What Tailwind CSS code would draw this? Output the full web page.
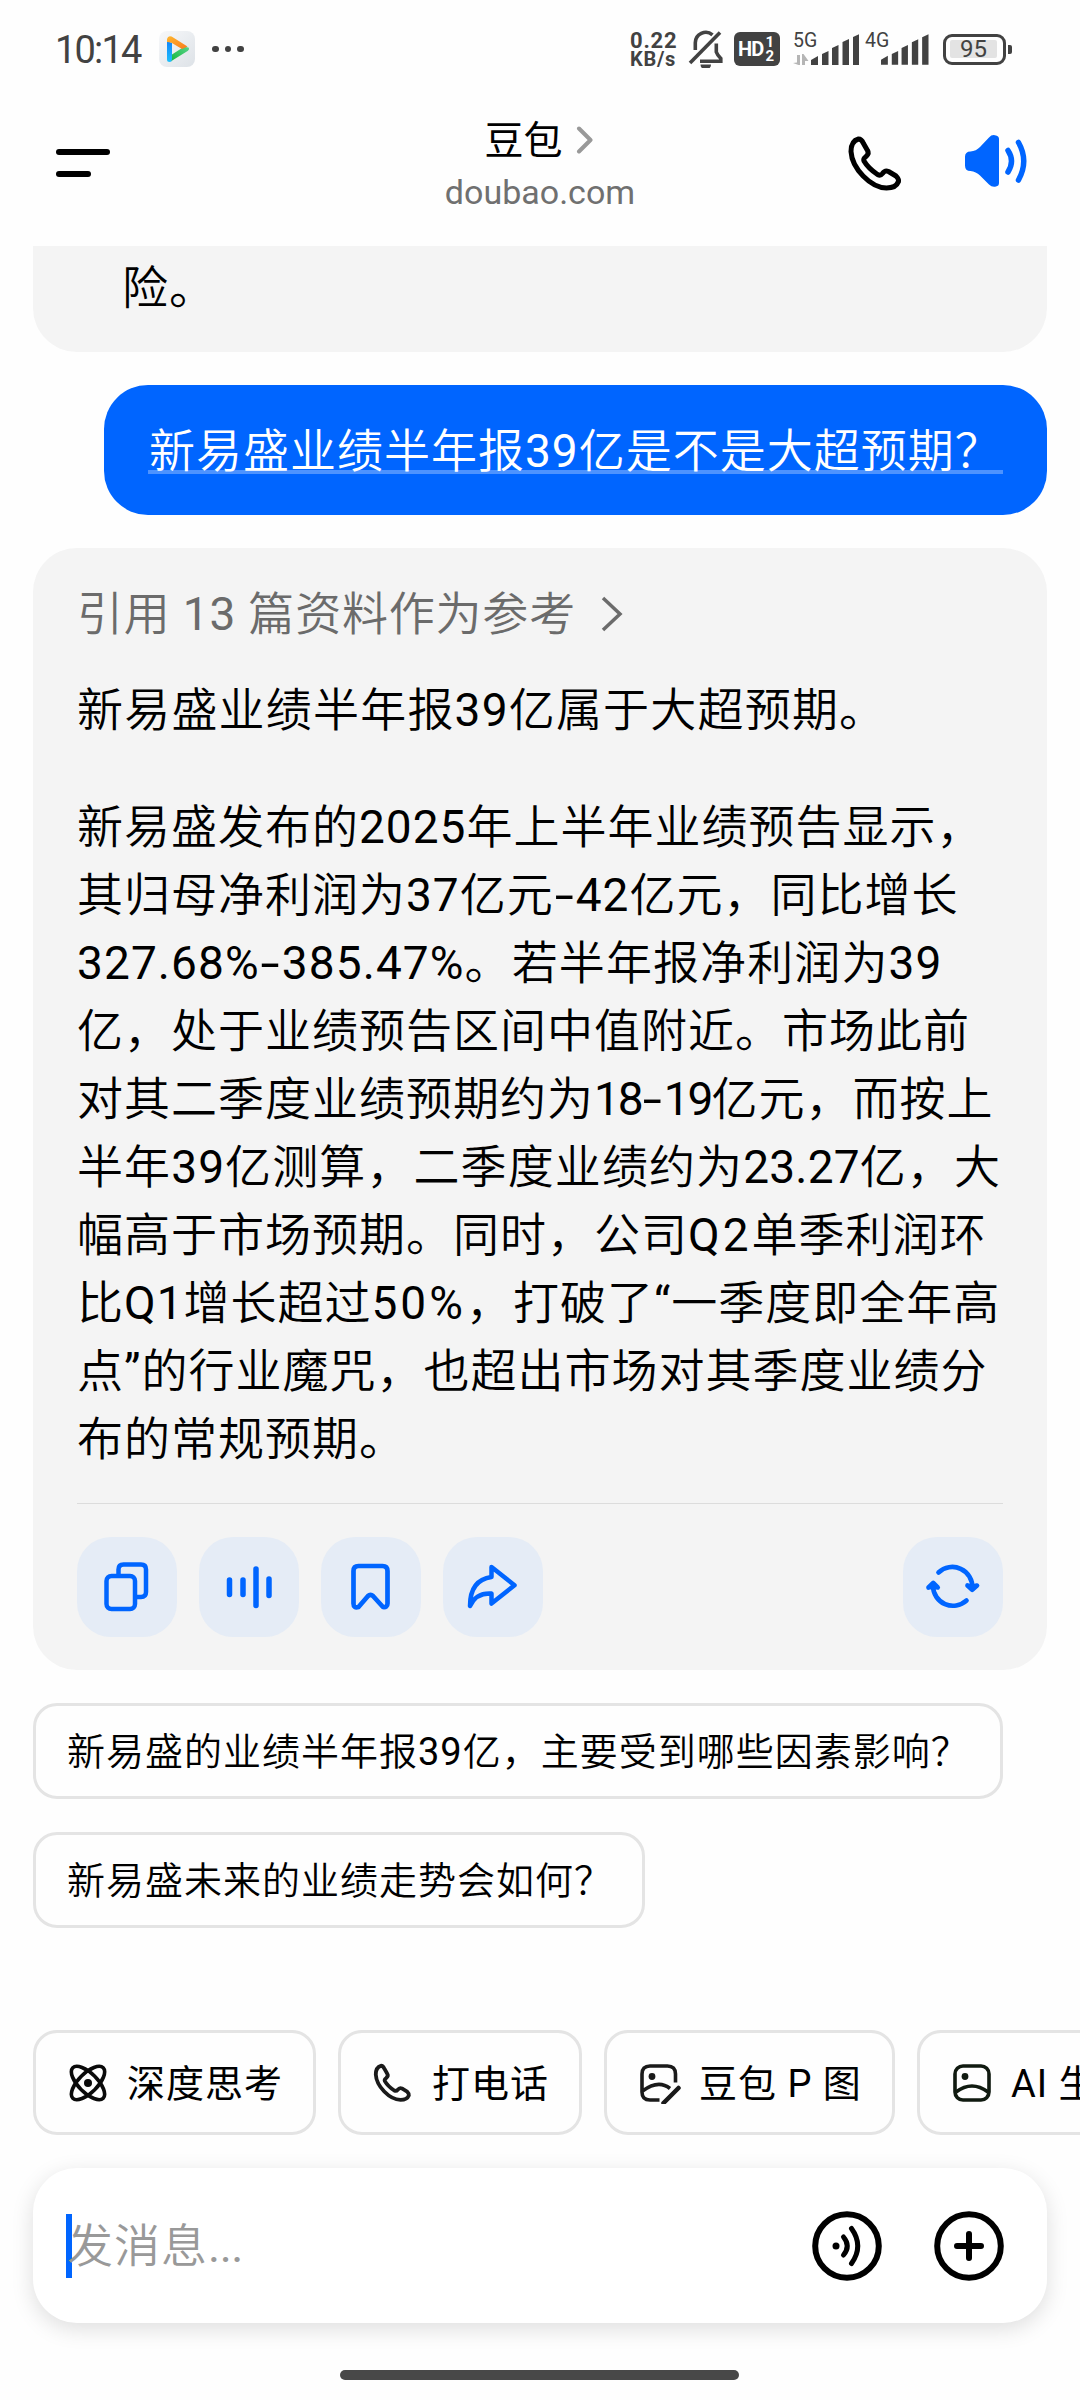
<!DOCTYPE html>
<html lang="zh-CN">
<head>
  <meta charset="UTF-8">
  <meta name="viewport" content="width=device-width, initial-scale=1.0">
  <title>豆包</title>
  <script src="https://cdn.jsdelivr.net/npm/@tailwindcss/browser@4"></script>
</head>
<body class="bg-white">
  <div class="w-[1080px] h-[2400px] overflow-hidden flex flex-col bg-[#fefefe] text-black font-['Roboto','Noto_Sans_CJK_SC_DemiLight','Noto_Sans_CJK_SC',sans-serif]">

    <!-- Status bar -->
    <div class="h-[98px] shrink-0 flex items-center pl-[55px] pr-[68px] text-[#424242]">
      <span class="w-[104px] text-[38px] leading-none tracking-[-1.8px] pt-[2px]">10:14</span>
      <svg class="size-9" viewBox="0 0 36 36">
        <defs>
          <linearGradient id="tile" x1="0" y1="0" x2="1" y2="1"><stop offset="0" stop-color="#f7f8fa"/><stop offset="1" stop-color="#dde2e7"/></linearGradient>
          <linearGradient id="orange" x1="0" y1="0" x2="1" y2="1"><stop offset="0" stop-color="#fdb62f"/><stop offset="1" stop-color="#fb7a1c"/></linearGradient>
          <linearGradient id="green" x1="0" y1="1" x2="1" y2="0"><stop offset="0" stop-color="#12b83c"/><stop offset="1" stop-color="#5ad38a"/></linearGradient>
          <linearGradient id="blue" x1="0" y1="0" x2="0" y2="1"><stop offset="0" stop-color="#0f83fb"/><stop offset="1" stop-color="#1fc0fb"/></linearGradient>
        </defs>
        <rect width="36" height="36" rx="8" fill="url(#tile)"/>
        <path d="M8 10v18.500a2.400 2.400 0 0 0 5 0V12z" fill="url(#blue)"/>
        <path d="M13 23.500 25 15.800l4.500.7q1.500 1.500-.5 3.300L12 30.200q1.200-1 1-3z" fill="url(#green)"/>
        <path d="M8 11V8q.8-3.600 4.600-2.400L28.500 15.400 23 18 12.500 11.700q-3-.8-4.500-.7z" fill="url(#orange)"/>
      </svg>
      <div class="flex gap-[6px] ml-[17px]">
        <i class="size-[6.500px] rounded-full bg-[#424242]"></i>
        <i class="size-[6.500px] rounded-full bg-[#424242]"></i>
        <i class="size-[6.500px] rounded-full bg-[#424242]"></i>
      </div>

      <div class="ml-auto mr-[2px] w-[50px] font-bold text-[22px] leading-[18px] pt-[2px] whitespace-nowrap">
        <div class="tracking-[0.8px]">0.22</div>
        <div class="text-[20px] tracking-[0.7px]">KB/s</div>
      </div>
      <svg class="w-[36px] h-[38px] ml-[6px]" viewBox="0 0 36 38" fill="none" stroke="#424242" stroke-width="3.600">
        <path d="M24.500 4.800A10.500 10.500 0 0 0 7.300 13v7"/>
        <path d="M28.300 13.500V22q1 3 4.500 6.500v2.800H12"/>
        <path d="M2 33 32 2.500"/>
        <path d="M12.500 34.500h10.500a5.200 5.200 0 0 1-10.500 0z" fill="#424242" stroke="none"/>
      </svg>
      <div class="w-[46px] h-[34px] ml-[10px] rounded-[6px] bg-[#424242] text-white font-bold flex items-center pl-[4px] gap-[2px]">
        <span class="text-[20px] leading-none tracking-[-0.8px]">HD</span>
        <span class="text-[15px] leading-[14px]">1<br>2</span>
      </div>
      <div class="w-[66px] h-[34px] ml-[13px] flex relative">
        <span class="text-[19.500px] leading-[18px]">5G</span>
        <svg class="absolute left-0 top-0 w-[66px] h-[34px]" viewBox="793 32 66 34" fill="#424242">
          <path d="M793 62l4-.5V54h3v10h-1.500zM802 64V53h1.500l5 7h-3.500v4z" fill="#b5b5b5" transform="translate(0 1)"/>
          <path d="M811 65v-5l7-4v9zM822 65V54l6.500-3v14zM832 65V48l6.500-3v20zM842.500 65V42l6.500-3v26zM853 65V37l6.500-3v31z"/>
        </svg>
      </div>
      <div class="w-[64px] h-[34px] ml-[6px] flex relative">
        <span class="text-[19.500px] leading-[18px]">4G</span>
        <svg class="absolute left-[16px] top-0 w-[48px] h-[34px]" viewBox="811 32 49 34" fill="#424242">
          <path d="M811 65v-5l7-4v9zM822 65V54l6.500-3v14zM832 65V48l6.500-3v20zM842.500 65V42l6.500-3v26zM853 65V37l6.500-3v31z"/>
        </svg>
      </div>
      <div class="ml-[14px] flex items-center gap-[2px]">
        <div class="w-[63px] h-[31px] rounded-[9px] border-[3px] border-[#424242] p-[4px]">
          <div class="w-[47px] h-[18px] mt-[-0.500px] bg-[#e3e3e3] text-[24px] leading-[18px] text-center rounded-[2px]">95</div>
        </div>
        <i class="w-[4px] h-[9px] bg-[#424242] rounded-r-[2px]"></i>
      </div>
    </div>

    <!-- Header -->
    <div class="h-[148px] shrink-0 grid grid-cols-[390px_300px_1fr]">
      <div class="pt-[51px] pl-[56px] flex flex-col gap-4">
        <i class="w-[54px] h-[6px] rounded-full bg-black"></i>
        <i class="w-[35px] h-[6px] rounded-full bg-black"></i>
      </div>
      <div class="pt-[17px] flex flex-col items-center">
        <div class="flex items-center h-[50px] pr-[2px]">
          <span class="text-[39px] leading-[50px] pt-[2px] font-['Roboto','Noto_Sans_CJK_SC',sans-serif]">豆包</span>
          <svg class="w-[18px] h-[28px] ml-[13px]" viewBox="0 0 18 28" fill="none" stroke="#999" stroke-width="4" stroke-linecap="round" stroke-linejoin="round"><path d="M3 2.500 14.500 14 3 25.500"/></svg>
        </div>
        <div class="text-[34px] leading-[54px] text-[#707070]">doubao.com</div>
      </div>
      <div class="flex pt-[37px] pl-[157px]">
        <svg class="w-[56px] h-[56px]" viewBox="0 0 56 56" fill="none" stroke="#000" stroke-width="5" stroke-linejoin="round">
          <path d="M11.500 4Q4 6 4 16.500C5 33.500 23.500 52.500 39.500 53Q49 53 51.500 46.500Q52 44 49 41L41.500 36.500Q38 35 35.500 38.500Q33.500 41 30.500 39.500Q21 33 17 26Q16 23.500 19 21.500Q22.500 18.500 20.500 15.500L16.500 8.500Q14.500 4 11.500 4Z"/>
        </svg>
        <svg class="w-[66px] h-[54px] ml-[59px]" viewBox="0 0 66 54" fill="none" stroke="#0065ff" stroke-width="5.500" stroke-linecap="round">
          <path d="M3 22Q3 16.500 8.500 16.500Q14 16 18 12L27 2.500Q30-1 34 .5Q37 1 37 4V48Q37 51 34 51.500Q30 52.500 27 49.500L18 40.500Q14 36.500 8.500 36Q3 36 3 30.500Z" fill="#0065ff" stroke="none"/>
          <path d="M46 15.500Q53 26 46 37M56.500 7.500Q67 26 56.500 45"/>
        </svg>
      </div>
    </div>

    <!-- Conversation -->
    <div class="px-[33px] flex flex-col text-[46px] tracking-[1px]">
      <div class="h-[106px] rounded-b-[44px] bg-[#f4f4f4] pl-[89px] pt-[8px] leading-[68px]">险。</div>

      <div class="mt-[33px] h-[130px] w-[943px] self-end rounded-[44px] bg-[#0065ff] text-white px-[44px] pt-[32px]">
        <div class="relative leading-[68px] whitespace-nowrap pl-px">新易盛业绩半年报39亿是不是大超预期？
          <i class="absolute left-0 top-[53px] w-full h-[4px] bg-white/30"></i>
        </div>
      </div>

      <div class="mt-[33px] h-[1122px] rounded-[44px] bg-[#f4f4f4] px-[44px] flex flex-col whitespace-nowrap leading-[68px]">
        <div class="pt-[32px] flex items-center text-[#6b6b6b] tracking-[0.8px]">引用 13 篇资料作为参考
          <svg class="w-[24px] h-[38px] ml-[24px]" viewBox="0 0 24 38" fill="none" stroke="#6b6b6b" stroke-width="3.500"><path d="M3 3 20 19 3 35"/></svg>
        </div>
        <p class="mt-[28px] tracking-[1.2px]">新易盛业绩半年报39亿属于大超预期。</p>
        <div class="mt-[49px]">
          <p>新易盛发布的2025年上半年业绩预告显示，</p>
          <p>其归母净利润为37亿元<span class="inline-block w-[22px] text-center scale-x-[1.5]">-</span>42亿元，同比增长</p>
          <p class="tracking-[1.1px]">327.68%<span class="inline-block w-[22px] text-center scale-x-[1.5]">-</span>385.47%。若半年报净利润为39</p>
          <p>亿，处于业绩预告区间中值附近。市场此前</p>
          <p>对其二季度业绩预期约为<span class="tracking-[-2px]">18</span><span class="inline-block w-[22px] text-center scale-x-[1.5]">-</span><span class="tracking-[-2px]">19</span>亿元，而按上</p>
          <p class="tracking-[1.1px]">半年39亿测算，二季度业绩约为<span class="tracking-[0.200px]">23.27</span>亿，大</p>
          <p>幅高于市场预期。同时，公司<span class="tracking-[3px]">Q2</span>单季利润环</p>
          <p>比Q1增长超过<span class="tracking-[3px]">50%</span>，打破了“一季度即全年高</p>
          <p>点”的行业魔咒，也超出市场对其季度业绩分</p>
          <p>布的常规预期。</p>
        </div>
        <div class="mt-[30px] h-px shrink-0 bg-[#dcdcdc]"></div>
        <div class="mt-[33px] flex gap-[22px]">
          <button class="size-[100px] rounded-[34px] bg-[#e5ecf6]">
            <svg class="size-[100px]" viewBox="77 1537 100 100" fill="none" stroke="#0065ff" stroke-width="4.500">
              <rect x="106.500" y="1576" width="28.500" height="33" rx="5"/>
              <path d="M118.500 1576v-6.500q0-5 5-5H141q5 0 5 5V1592q0 5-5 5h-6"/>
            </svg>
          </button>
          <button class="size-[100px] rounded-[34px] bg-[#e5ecf6]">
            <svg class="size-[100px]" viewBox="199 1537 100 100" fill="none" stroke="#0065ff" stroke-width="5.500" stroke-linecap="round"><path d="M229.500 1580v14.500M243 1580v14.500M256 1569v36.500M269 1579v16.500"/></svg>
          </button>
          <button class="size-[100px] rounded-[34px] bg-[#e5ecf6]">
            <svg class="size-[100px]" viewBox="321 1537 100 100" fill="none" stroke="#0065ff" stroke-width="4.700" stroke-linejoin="round"><path d="M353.500 1571q0-5 5-5h24q5 0 5 5v32.500q0 4-4.500 3.500L373 1596q-2.500-2.500-5 0L358.500 1607q-5 1.500-5-3.500z"/></svg>
          </button>
          <button class="size-[100px] rounded-[34px] bg-[#e5ecf6]">
            <svg class="size-[100px]" viewBox="443 1537 100 100" fill="none" stroke="#0065ff" stroke-width="4.500" stroke-linejoin="round"><path d="M470 1606Q470 1580 491.500 1577V1567L514.500 1585.300L491.500 1603.500V1593.500Q476 1592.500 470 1606Z"/></svg>
          </button>
          <button class="size-[100px] rounded-[34px] bg-[#e5ecf6] ml-auto">
            <svg class="size-[100px]" viewBox="901 1537 100 100" fill="none" stroke="#0065ff" stroke-width="4.700" stroke-linecap="round" stroke-linejoin="round">
              <path d="M936.500 1572.500A20 20 0 0 1 970.300 1588M964.500 1600.500A20 20 0 0 1 931 1586"/>
              <path d="M965.500 1585.500l4.700 4.300 4.800-4.300-4.800 1zM926.500 1587.500l4.700-4.500 4.500 4.500-4.500-1z"/>
            </svg>
          </button>
        </div>
      </div>

      <!-- Suggested questions -->
      <div class="mt-[33px] h-[96px] w-[970px] rounded-[24px] border-[3px] border-[#e4e4e4] pl-[31px] pt-px text-[38px] leading-[90px] whitespace-nowrap">新易盛的业绩半年报39亿，主要受到哪些因素影响？</div>
      <div class="mt-[33px] h-[96px] w-[612px] rounded-[24px] border-[3px] border-[#e4e4e4] pl-[31px] pt-px text-[38px] leading-[90px] whitespace-nowrap">新易盛未来的业绩走势会如何？</div>
    </div>

    <!-- Shortcut chips -->
    <div class="mt-[102px] ml-[33px] h-[105px] shrink-0 flex gap-[22px] text-[38px] tracking-[1px] font-['Roboto','Noto_Sans_CJK_SC',sans-serif] whitespace-nowrap">
      <div class="w-[283px] shrink-0 rounded-[24px] border-[3px] border-[#e4e4e4] pl-[33px] flex items-center">
        <svg class="size-[38px] mr-[20px]" viewBox="-19 -19 38 38" fill="none" stroke="#0a0a0a" stroke-width="3.600">
          <ellipse rx="21.500" ry="9.500" transform="rotate(45)"/>
          <ellipse rx="21.500" ry="9.500" transform="rotate(-45)"/>
          <circle r="4" fill="#0a0a0a" stroke="none"/>
        </svg>
        <span class="pt-[3px]">深度思考</span>
      </div>
      <div class="w-[244px] shrink-0 rounded-[24px] border-[3px] border-[#e4e4e4] pl-[32px] flex items-center">
        <svg class="size-[39px] mr-[20px]" viewBox="0 0 56 56" fill="none" stroke="#1a1a1a" stroke-width="5.500" stroke-linejoin="round">
          <path d="M11.500 4Q4 6 4 16.500C5 33.500 23.500 52.500 39.500 53Q49 53 51.500 46.500Q52 44 49 41L41.500 36.500Q38 35 35.500 38.500Q33.500 41 30.500 39.500Q21 33 17 26Q16 23.500 19 21.500Q22.500 18.500 20.500 15.500L16.500 8.500Q14.500 4 11.500 4Z"/>
        </svg>
        <span class="pt-[3px]">打电话</span>
      </div>
      <div class="w-[291px] shrink-0 rounded-[24px] border-[3px] border-[#e4e4e4] pl-[33px] flex items-center">
        <svg class="size-[42px] mr-[17px]" viewBox="0 -2 42 42" fill="none" stroke="#1a1a1a" stroke-width="3.600">
          <path d="M35.500 18.500V10q0-8-8-8H10Q2 2 2 10v18q0 8 8 8h9.500M2.500 27Q18.500 15 30 24.500"/>
          <circle cx="12" cy="12.500" r="3.400" fill="#1a1a1a" stroke="none"/>
          <path d="M23.500 39 38.500 24" stroke-width="4.500" stroke-linecap="round"/>
        </svg>
        <span class="pt-[3px]">豆包 P 图</span>
      </div>
      <div class="w-[291px] shrink-0 rounded-[24px] border-[3px] border-[#e4e4e4] pl-[33px] flex items-center">
        <svg class="size-[38px] mr-[20px]" viewBox="0 0 38 38" fill="none" stroke="#101a10" stroke-width="3.600">
          <rect x="2" y="2" width="34" height="34" rx="8"/>
          <path d="M3 28Q19 16 35 28"/>
          <circle cx="12" cy="12.500" r="3.400" fill="#101a10" stroke="none"/>
        </svg>
        <span class="pt-[3px]">AI 生图</span>
      </div>
    </div>

    <!-- Message input -->
    <div class="mt-[33px] mx-[33px] h-[155px] shrink-0 rounded-[44px] bg-white shadow-[0_6px_22px_rgba(0,0,0,0.13)] flex items-center pl-[33px] pr-[43px]">
      <i class="w-[6px] h-[64px] bg-[#0065ff]"></i>
      <span class="-ml-[5px] text-[46px] tracking-[1px] leading-[68px] text-[#999]">发消息<span class="tracking-[-0.500px]">...</span></span>
      <svg class="size-[70px] ml-auto" viewBox="-35 -35 70 70" fill="none" stroke="#000" stroke-width="5" stroke-linecap="round">
        <circle r="31.800" stroke-width="6"/>
        <circle cx="-11" r="3.500" fill="#000" stroke="none"/>
        <path d="M-3.500-9Q4 0-3.500 9M4.500-17.500Q17 0 4.500 17.500"/>
      </svg>
      <svg class="size-[70px] ml-[52px]" viewBox="-35 -35 70 70" fill="none" stroke="#000" stroke-width="6" stroke-linecap="round">
        <circle r="31.800"/>
        <path d="M-12 0h24M0-12v24"/>
      </svg>
    </div>

    <!-- Home indicator -->
    <div class="mt-[47px] ml-[340px] w-[399px] h-[10px] shrink-0 rounded-full bg-[#484848]"></div>
  </div>
</body>
</html>
